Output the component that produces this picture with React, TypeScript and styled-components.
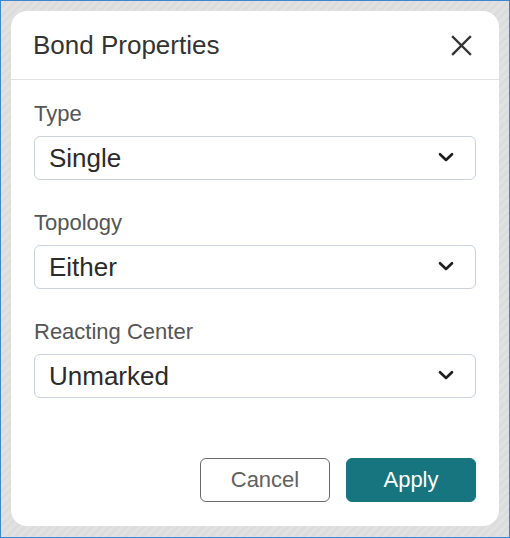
import React from "react";
import styled, { createGlobalStyle } from "styled-components";

const GlobalStyle = createGlobalStyle`
  html, body {
    margin: 0;
    padding: 0;
    background: #dedede;
  }
  * {
    box-sizing: border-box;
  }
`;

const Backdrop = styled.div`
  width: 510px;
  height: 538px;
  padding: 10px;
  border: 1px solid #3c87cf;
  background: repeating-linear-gradient(
    -45deg,
    #dcdcdc 0px,
    #dcdcdc 3px,
    #e1e1e1 3px,
    #e1e1e1 6px
  );
  font-family: "Liberation Sans", Arial, sans-serif;
`;

const Dialog = styled.div`
  width: 488px;
  height: 515px;
  display: flex;
  flex-direction: column;
  background: #ffffff;
  border-radius: 16px;
  overflow: hidden;
`;

const Header = styled.div`
  height: 69px;
  flex-shrink: 0;
  display: flex;
  align-items: center;
  justify-content: space-between;
  padding: 0 27px 0 22px;
  border-bottom: 1px solid #e2e2e2;
`;

const Title = styled.h2`
  margin: 0;
  font-size: 26px;
  line-height: 30px;
  font-weight: normal;
  color: #333333;
`;

const CloseButton = styled.button`
  width: 21px;
  height: 21px;
  padding: 0;
  border: none;
  background: none;
  display: flex;
  align-items: center;
  justify-content: center;
  cursor: pointer;
`;

const Body = styled.div`
  display: flex;
  flex-direction: column;
  gap: 31px;
  padding: 22px 23px 0;
`;

const Field = styled.div`
  display: flex;
  flex-direction: column;
  gap: 10px;
`;

const Label = styled.label`
  padding-left: 0;
  font-size: 22px;
  line-height: 24px;
  color: #555555;
`;

const SelectWrap = styled.div`
  position: relative;
  height: 44px;
`;

const Select = styled.select`
  width: 100%;
  height: 44px;
  padding: 0 40px 1px 14px;
  border: 1px solid #c9d1dc;
  border-radius: 6px;
  background: #ffffff;
  font-family: "Liberation Sans", Arial, sans-serif;
  font-size: 26px;
  color: #2b2b2b;
  appearance: none;
  outline: none;
`;

const Chevron = styled.svg`
  position: absolute;
  right: 22px;
  top: 16px;
  pointer-events: none;
`;

const Footer = styled.div`
  margin-top: auto;
  display: flex;
  justify-content: flex-end;
  gap: 16px;
  padding: 0 23px 24px;
`;

const Button = styled.button<{ $primary?: boolean }>`
  width: 130px;
  height: 44px;
  border-radius: 6px;
  font-family: "Liberation Sans", Arial, sans-serif;
  font-size: 22px;
  cursor: pointer;
  border: 1px solid ${(p) => (p.$primary ? "#177580" : "#6a6a6a")};
  background: ${(p) => (p.$primary ? "#177580" : "#ffffff")};
  color: ${(p) => (p.$primary ? "#ffffff" : "#616161")};
`;

const fields = [
  { label: "Type", value: "Single", options: ["Single", "Double", "Triple", "Aromatic"] },
  { label: "Topology", value: "Either", options: ["Either", "Ring", "Chain"] },
  {
    label: "Reacting Center",
    value: "Unmarked",
    options: ["Unmarked", "Not center", "Center", "No change", "Made/broken", "Order changes"],
  },
];

export default function App() {
  return (
    <>
      <GlobalStyle />
      <Backdrop>
        <Dialog>
          <Header>
            <Title>Bond Properties</Title>
            <CloseButton aria-label="Close">
              <svg width="21" height="21" viewBox="0 0 21 21">
                <path
                  d="M2 2 L19 19 M19 2 L2 19"
                  stroke="#333333"
                  strokeWidth="2.4"
                  strokeLinecap="square"
                />
              </svg>
            </CloseButton>
          </Header>
          <Body>
            {fields.map((f) => (
              <Field key={f.label}>
                <Label>{f.label}</Label>
                <SelectWrap>
                  <Select defaultValue={f.value}>
                    {f.options.map((o) => (
                      <option key={o}>{o}</option>
                    ))}
                  </Select>
                  <Chevron width="16" height="10" viewBox="0 0 16 10">
                    <path
                      d="M2 2.2 L8 8 L14 2.2"
                      fill="none"
                      stroke="#1e1e1e"
                      strokeWidth="2.6"
                      strokeLinecap="round"
                      strokeLinejoin="round"
                    />
                  </Chevron>
                </SelectWrap>
              </Field>
            ))}
          </Body>
          <Footer>
            <Button>Cancel</Button>
            <Button $primary>Apply</Button>
          </Footer>
        </Dialog>
      </Backdrop>
    </>
  );
}
